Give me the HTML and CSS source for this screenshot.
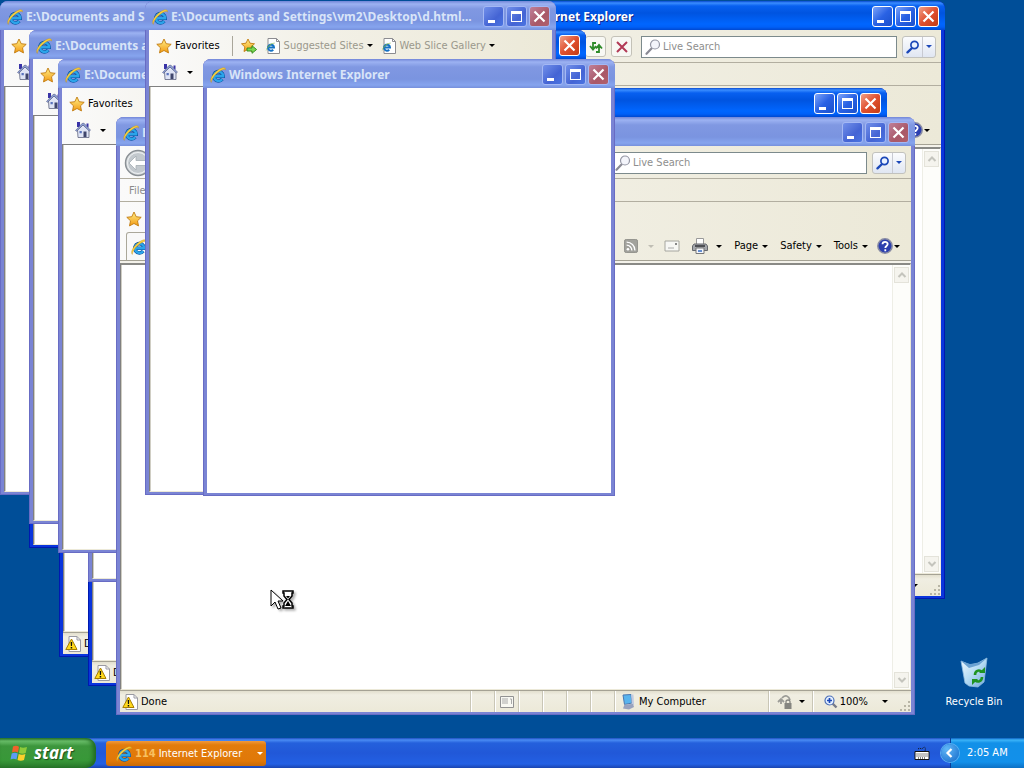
FILE: index.html
```
<!DOCTYPE html>
<html lang="en">
<head>
	<meta charset="UTF-8">
	<meta name="viewport" content="width=device-width, initial-scale=1.0">
	<title>Desktop</title>
	<link rel="stylesheet" href="styles.css">
</head>
<body>
	<!-- shared icons -->
	<svg class="defs" width="0" height="0" aria-hidden="true">
		<defs>
			<linearGradient id="gold" x1="0" y1="0" x2="0" y2="1"><stop offset="0" stop-color="#fff08a"/><stop offset="1" stop-color="#f39a12"/></linearGradient>
			<radialGradient id="sea" cx=".4" cy=".3" r=".8"><stop offset="0" stop-color="#5fd2fa"/><stop offset="1" stop-color="#0b62b8"/></radialGradient>
			<linearGradient id="bin" x1="0" y1="0" x2="1" y2="1"><stop offset="0" stop-color="#f4fbff"/><stop offset=".5" stop-color="#b5dcf4"/><stop offset="1" stop-color="#6fa5d8"/></linearGradient>
		</defs>
		<symbol id="ie" viewBox="0 0 16 16">
			<path d="M4 9.200h9.200A4.700 4.700 0 1 0 12.200 12.200" fill="none" stroke="#0b4f9c" stroke-width="3.600"/>
			<path d="M4 9.200h9.200A4.700 4.700 0 1 0 12.200 12.200" fill="none" stroke="#2ba4ea" stroke-width="2.400"/>
			<path d="M1.300 15.400C-1 12.800 3 6 9 2.400 12.500.4 15.900.1 15.600 3c-.6-1.300-3-.7-6 1.300C4.900 7.400 1.300 12.500 1.300 15.400z" fill="#ffd23c" stroke="#b98b18" stroke-width=".4"/>
		</symbol>
		<symbol id="star" viewBox="0 0 16 16"><path d="M8 1l2.200 4.700 5 .6-3.700 3.500 1 5.100L8 12.500l-4.500 2.400 1-5.100L.8 6.300l5-.6z" fill="url(#gold)" stroke="#c17a10" stroke-width=".9"/></symbol>
		<symbol id="staradd" viewBox="0 0 16 16"><path d="M7 1l2 4.200 4.500.6-3.300 3.100.8 4.600-4-2.200-4 2.200.8-4.600L.5 5.800 5 5.200z" fill="url(#gold)" stroke="#c17a10" stroke-width=".9"/><path d="M6 10h5V7.700l4.600 3.800L11 15.300V13H6z" fill="#7ad651" stroke="#2f8a1c" stroke-width=".9"/></symbol>
		<symbol id="page" viewBox="0 0 16 16"><path d="M3 .5h8.500L14.500 3.500v12H3z" fill="#fff" stroke="#8c8c90"/><path d="M11.500.5v3h3" fill="none" stroke="#8c8c90"/><path d="M3 9.500h6A3 3 0 1 0 8.200 11.700" fill="none" stroke="#1572c4" stroke-width="2"/><path d="M1 13.500c-.7-1.500 2-6 5.500-8 2-1.100 3.800-1.200 3.500 0-1-.7-3 .4-5 1.900C2.500 9.500.8 12 1 13.500z" fill="#7db33c"/></symbol>
		<symbol id="home" viewBox="0 0 16 16"><path d="M2 0h3v5H2zM11.500 1.500h2v4h-2z" fill="#3933a8"/><path d="M2.500 8L8 3l6 5v7.500h-11z" fill="#dfe4f5" stroke="#5f6481" stroke-width=".8"/><path d="M.5 8.500L7 1.500l2-.3 6.500 7-1.200.8L8 3 1.500 9.300z" fill="#8fa2d6" stroke="#555d86" stroke-width=".6"/><path d="M8.500 9.500h3V15h-3z" fill="#40466c"/><path d="M4.500 9h2.300v2.300H4.500z" fill="#5a73bd"/></symbol>
		<symbol id="warn" viewBox="0 0 16 16"><path d="M4 .5h8L15.500 4v11.500H4z" fill="#fff" stroke="#9a9aa2"/><path d="M12 .5V4h3.500" fill="none" stroke="#9a9aa2"/><path d="M6.500 3L12 13.500H.8z" fill="#ffd91c" stroke="#a77e00" stroke-linejoin="round"/><path d="M5.700 6h1.500l-.2 4H5.900zM5.700 11h1.500v1.500H5.700z" fill="#111"/></symbol>
		<symbol id="lens" viewBox="0 0 16 16"><path d="M6.500 9.500L1.500 14.800" stroke="#8b8b95" stroke-width="2.200" stroke-linecap="round"/><circle cx="10" cy="5.500" r="4.500" fill="#f4f5fb" stroke="#9496a4" stroke-width="1.200"/></symbol>
		<symbol id="find" viewBox="0 0 14 14"><path d="M5.500 8.500L1.500 12.300" stroke="#1c48b8" stroke-width="2.400" stroke-linecap="round"/><circle cx="8.500" cy="5" r="3.600" fill="#eaf2ff" stroke="#1c48b8" stroke-width="1.700"/></symbol>
		<symbol id="min" viewBox="0 0 21 21"><path d="M5 14h7v3H5z" fill="#fff"/></symbol>
		<symbol id="max" viewBox="0 0 21 21"><path d="M5 5h11v11H5zM6 8v7h9V8z" fill="#fff" fill-rule="evenodd"/></symbol>
		<symbol id="close" viewBox="0 0 21 21"><path d="M5.500 5.500l10 10M15.500 5.500l-10 10" stroke="#fff" stroke-width="2.200"/></symbol>
		<symbol id="up" viewBox="0 0 10 10"><path d="M1.500 7L5 3.500 8.500 7" fill="none" stroke="#c4c4bd" stroke-width="2"/></symbol>
		<symbol id="down" viewBox="0 0 10 10"><path d="M1.500 3L5 6.500 8.500 3" fill="none" stroke="#c4c4bd" stroke-width="2"/></symbol>
		<symbol id="rss" viewBox="0 0 16 16"><rect x=".5" y=".5" width="15" height="15" rx="2" fill="#a2a29c" stroke="#8c8c86"/><circle cx="4.500" cy="11.700" r="1.500" fill="#fff"/><path d="M3 7a6 6 0 0 1 6 6M3 3.500A9.500 9.500 0 0 1 12.500 13" fill="none" stroke="#fff" stroke-width="1.500"/></symbol>
		<symbol id="mail" viewBox="0 0 16 16"><path d="M1 3h14v10H1z" fill="#f7f7f4" stroke="#a6a69f"/><path d="M11 5h2v2h-2z" fill="#888"/><path d="M4 10h6" stroke="#aaa"/></symbol>
		<symbol id="print" viewBox="0 0 16 16"><path d="M4.500.5h7v6h-7z" fill="#fff" stroke="#999"/><path d="M2 6h12l1.500 2v4.500H.5V8z" fill="#a4a7ac" stroke="#66686d"/><path d="M3 7h10v2H3z" fill="#4d4f54"/><path d="M4 10h8v5.500H4z" fill="#f4f6fa" stroke="#777"/><path d="M6 12h4v2H6z" fill="#658ed0"/></symbol>
		<symbol id="help" viewBox="0 0 16 16"><circle cx="8" cy="8" r="7.200" fill="#2c3fae" stroke="#898ca4" stroke-width="1.500"/><path d="M5.500 6.300c0-3.200 5.200-3.200 5.200-.2 0 1.900-2.400 1.900-2.400 3.900M8.300 11.300v2" fill="none" stroke="#fff" stroke-width="1.800"/></symbol>
		<symbol id="refresh" viewBox="0 0 16 16"><path d="M8 4H5v5M2 7l3 3.500L8 7M8 13h3V7M8 9.500L11 6l3 3.500" fill="none" stroke="#2f8b2a" stroke-width="1.800"/></symbol>
		<symbol id="stop" viewBox="0 0 16 16"><path d="M3 3l10 10M13 3L3 13" stroke="#b23a56" stroke-width="2"/></symbol>
		<symbol id="grip" viewBox="0 0 12 12"><path d="M9 1h2v2H9zM5 5h2v2H5zM9 5h2v2H9zM1 9h2v2H1zM5 9h2v2H5zM9 9h2v2H9z" fill="#b8b5a5"/></symbol>
	</svg>

	<main class="desktop">
		<!-- full window behind everything -->
		<section class="window full active w-c">
			<header class="titlebar"></header>
			<div class="page"></div>
			<footer class="status"><div class="cell grow"><svg class="i16"><use href="#warn"/></svg>Done</div></footer>
		</section>

		<section class="window full active w-a">
			<header class="titlebar">
				<svg class="i16"><use href="#ie"/></svg>
				<h2>E:\Documents and Settings\vm2\Desktop\d.html - Windows Internet Explorer</h2>
				<button class="wb" aria-label="Minimize"><svg><use href="#min"/></svg></button>
				<button class="wb" aria-label="Maximize"><svg><use href="#max"/></svg></button>
				<button class="wb x" aria-label="Close"><svg><use href="#close"/></svg></button>
			</header>
			<div class="nav">
				<input class="address" type="text" aria-label="Address">
				<button class="tool" aria-label="Refresh"><svg class="i16"><use href="#refresh"/></svg></button>
				<button class="tool" aria-label="Stop"><svg class="i16"><use href="#stop"/></svg></button>
				<label class="search"><svg class="i16"><use href="#lens"/></svg><input type="text" placeholder="Live Search" aria-label="Live Search"></label>
				<div class="go"><button aria-label="Search"><svg class="i14"><use href="#find"/></svg></button><button aria-label="Search options"><i class="arrow"></i></button></div>
			</div>
			<div class="menu"></div>
			<div class="bars">
				<div class="favs"></div>
				<div class="commands">
					<button class="help" aria-label="Help"><svg class="i16"><use href="#help"/></svg><i class="arrow"></i></button>
				</div>
			</div>
			<div class="page">
				<div class="scroll">
					<button aria-label="Scroll up"><svg><use href="#up"/></svg></button>
					<button aria-label="Scroll down"><svg><use href="#down"/></svg></button>
				</div>
			</div>
			<footer class="status">
				<div class="cell grow"></div>
				<div class="cell zoom"><i class="arrow"></i><svg class="grip"><use href="#grip"/></svg></div>
			</footer>
		</section>

		<section class="window popup active w-q">
			<header class="titlebar">
				<h2></h2>
				<button class="wb x" aria-label="Close"><svg><use href="#close"/></svg></button>
			</header>
			<div class="page"></div>
		</section>

		<section class="window full active w-b">
			<header class="titlebar">
				<h2></h2>
				<button class="wb" aria-label="Minimize"><svg><use href="#min"/></svg></button>
				<button class="wb" aria-label="Maximize"><svg><use href="#max"/></svg></button>
				<button class="wb x" aria-label="Close"><svg><use href="#close"/></svg></button>
			</header>
			<div class="page"></div>
			<footer class="status"><div class="cell grow"><svg class="i16"><use href="#warn"/></svg>Done</div></footer>
		</section>

		<section class="window popup active w-r"><header class="titlebar"></header><div class="page"></div></section>

		<section class="window popup w-u">
			<header class="titlebar">
				<svg class="i16"><use href="#ie"/></svg>
				<h2>E:\Documents and Settings</h2>
			</header>
			<div class="favs"><svg class="i16"><use href="#star"/></svg></div>
			<div class="commands"><svg class="i16"><use href="#home"/></svg></div>
			<div class="page"></div>
		</section>

		<section class="window popup w-p">
			<header class="titlebar">
				<svg class="i16"><use href="#ie"/></svg>
				<h2>E:\Documents and</h2>
			</header>
			<div class="favs"><svg class="i16"><use href="#star"/></svg></div>
			<div class="commands"><svg class="i16"><use href="#home"/></svg></div>
			<div class="page"></div>
		</section>

		<section class="window popup w-s"><header class="titlebar"></header><div class="page"></div></section>

		<section class="window popup w-t">
			<header class="titlebar">
				<svg class="i16"><use href="#ie"/></svg>
				<h2>E:\Documents</h2>
			</header>
			<div class="favs"><button><svg class="i16"><use href="#star"/></svg>Favorites</button></div>
			<div class="commands"><button aria-label="Home"><svg class="i16"><use href="#home"/></svg><i class="arrow"></i></button></div>
			<div class="page"></div>
		</section>

		<!-- main browser window -->
		<section class="window full w-main">
			<header class="titlebar">
				<svg class="i16"><use href="#ie"/></svg>
				<h2>E:\</h2>
				<button class="wb" aria-label="Minimize"><svg><use href="#min"/></svg></button>
				<button class="wb" aria-label="Maximize"><svg><use href="#max"/></svg></button>
				<button class="wb x" aria-label="Close"><svg><use href="#close"/></svg></button>
			</header>
			<div class="nav">
				<button class="back" aria-label="Back"><svg viewBox="0 0 28 28"><circle cx="14" cy="14" r="12.500" fill="#d6dadd" stroke="#8a9095" stroke-width="1.500"/><circle cx="14" cy="14" r="10.500" fill="#c3c9ce" stroke="#eef1f3"/><path d="M5 14l7-7v4.500h10v5H12V21z" fill="#fff" stroke="#a5adb4" stroke-width=".8"/></svg></button>
				<input class="address" type="text" aria-label="Address">
				<label class="search"><svg class="i16"><use href="#lens"/></svg><input type="text" placeholder="Live Search" aria-label="Live Search"></label>
				<div class="go"><button aria-label="Search"><svg class="i14"><use href="#find"/></svg></button><button aria-label="Search options"><i class="arrow"></i></button></div>
			</div>
			<div class="menu"><button>File</button></div>
			<div class="bars">
				<div class="favs"><svg class="i16"><use href="#star"/></svg></div>
				<div class="commands">
					<div class="tab"><svg class="i16"><use href="#ie"/></svg></div>
					<button class="off" aria-label="Feeds"><svg class="i14"><use href="#rss"/></svg><i class="arrow"></i></button>
					<button aria-label="Read mail"><svg class="i16"><use href="#mail"/></svg></button>
					<button class="wide" aria-label="Print"><svg class="i16"><use href="#print"/></svg><i class="arrow"></i></button>
					<button>Page<i class="arrow"></i></button>
					<button>Safety<i class="arrow"></i></button>
					<button>Tools<i class="arrow"></i></button>
					<button class="help" aria-label="Help"><svg class="i16"><use href="#help"/></svg><i class="arrow"></i></button>
				</div>
			</div>
			<div class="page">
				<div class="scroll">
					<button aria-label="Scroll up"><svg><use href="#up"/></svg></button>
					<button aria-label="Scroll down"><svg><use href="#down"/></svg></button>
				</div>
			</div>
			<footer class="status">
				<div class="cell grow"><svg class="i16"><use href="#warn"/></svg>Done</div>
				<div class="cell"></div>
				<div class="cell"><svg class="i16" viewBox="0 0 16 16"><path d="M1.500 2.500h13v11h-13z" fill="#f8f8f2" stroke="#929292"/><path d="M3 5h6M3 7h6M3 9h6M11 5h1.500v5" fill="none" stroke="#aaa"/></svg></div>
				<div class="cell"></div>
				<div class="cell"></div>
				<div class="cell"></div>
				<div class="cell"></div>
				<div class="cell zone"><svg class="i16" viewBox="0 0 16 16"><path d="M3 1l8-.5 1 8.500-7.500 1.500z" fill="#59b4ee" stroke="#4a78b0"/><path d="M11 .5h2.500l.5 10-2 1.500z" fill="#c3cbe0"/><path d="M4.500 10.500L13 10l1 3-5 2.500-6-1z" fill="#98a2be"/></svg>My Computer</div>
				<div class="cell lock"><svg class="i16" viewBox="0 0 16 16"><path d="M1 8l3-3 3 3M4 6v4M5 4c3-4 7-2 8 2" fill="none" stroke="#9b9b96" stroke-width="1.800"/><path d="M7.500 9h7v6h-7z" fill="#858580"/><path d="M9 9V7.500c0-2 4-2 4 0V9" fill="none" stroke="#858580" stroke-width="1.300"/></svg><i class="arrow"></i></div>
				<div class="cell zoom"><svg class="i14" viewBox="0 0 14 14"><path d="M8.500 8.500l4 4" stroke="#777b88" stroke-width="2.400"/><circle cx="5.500" cy="5.500" r="4.500" fill="#e4f0ff" stroke="#4d70b8" stroke-width="1.200"/><path d="M3 5.500h5M5.500 3v5" stroke="#1c48b8" stroke-width="1.700"/></svg><span>100%</span><i class="arrow"></i><svg class="grip"><use href="#grip"/></svg></div>
			</footer>
		</section>

		<section class="window popup w-d">
			<header class="titlebar">
				<svg class="i16"><use href="#ie"/></svg>
				<h2>E:\Documents and Settings\vm2\Desktop\d.html...</h2>
				<button class="wb" aria-label="Minimize"><svg><use href="#min"/></svg></button>
				<button class="wb" aria-label="Maximize"><svg><use href="#max"/></svg></button>
				<button class="wb x" aria-label="Close"><svg><use href="#close"/></svg></button>
			</header>
			<div class="favs">
				<button class="sep"><svg class="i16"><use href="#star"/></svg>Favorites</button>
				<button aria-label="Add to favorites"><svg class="i16"><use href="#staradd"/></svg></button>
				<button class="dim"><svg class="i16"><use href="#page"/></svg>Suggested Sites<i class="arrow"></i></button>
				<button class="dim"><svg class="i16"><use href="#page"/></svg>Web Slice Gallery<i class="arrow"></i></button>
			</div>
			<div class="commands"><button aria-label="Home"><svg class="i16"><use href="#home"/></svg><i class="arrow"></i></button></div>
			<div class="page"></div>
		</section>

		<section class="window popup plain w-f">
			<header class="titlebar">
				<svg class="i16"><use href="#ie"/></svg>
				<h2>Windows Internet Explorer</h2>
				<button class="wb" aria-label="Minimize"><svg><use href="#min"/></svg></button>
				<button class="wb" aria-label="Maximize"><svg><use href="#max"/></svg></button>
				<button class="wb x" aria-label="Close"><svg><use href="#close"/></svg></button>
			</header>
			<div class="page"></div>
		</section>

		<a class="recycle" href="#">
			<svg viewBox="0 0 32 32"><path d="M3 5l9 4 8-2 9-5-3 24-6 5-9-1-4-3z" fill="url(#bin)" stroke="#8fbde2" stroke-width=".8"/><path d="M3 5l8 7 10-3 8-7-9 5-8 1z" fill="#6aa2d2"/><path d="M17 19c0-4 4-6 7-3M24 21c0 4-4 6-7 3" fill="none" stroke="#1f9422" stroke-width="2.600"/><path d="M21 17h6v-6zM20 23h-6v6z" fill="#1f9422"/></svg>
			<span>Recycle Bin</span>
		</a>

		<svg class="cursor" viewBox="0 0 26 22"><path d="M1 1v16l4-4 3 7 3-1-3-7h5z" fill="#fff" stroke="#000"/><path d="M13 2h10v2h-1v3l-3 3.500 3 3.500v3h1v2H13v-2h1v-3l3-3.500L14 7V4h-1z" fill="#fff" stroke="#000" stroke-width="1.500"/><path d="M16 7h4l-2 2.500zM18 12l3 5h-6z" fill="#000"/></svg>
	</main>

	<footer class="taskbar">
		<button class="start"><svg viewBox="0 0 20 18"><path d="M3 2.500c2-1 4-1 6 .2L8 8.500c-2-1-4-1-6 0z" fill="#f0622c"/><path d="M10 3c2 1 4 1 7 0l-1.300 6c-2 1-4.500 1-6.700 0z" fill="#8ecb3a"/><path d="M1.700 9.500c2-1 4-1 6 0L6.500 15.500c-2-1-4-1-6 0z" fill="#5d9cf5"/><path d="M8.700 10c2 1 4.500 1 6.700 0L14 16c-2 1-4.500 1-6.500 0z" fill="#fbd02c"/></svg>start</button>
		<button class="task"><svg class="i16"><use href="#ie"/></svg><b>114</b><span>Internet Explorer</span><i class="arrow"></i></button>
		<svg class="i16 keyboard" viewBox="0 0 16 16"><path d="M1 6.500h14v8H1z" fill="#fff" stroke="#111"/><path d="M2.500 9h11M2.500 11h11M4 13h8" stroke="#111" stroke-dasharray="1 1"/><path d="M4 4c2-2 3 1 5-1s3 0 2 3" fill="none" stroke="#111" stroke-dasharray="1 1"/></svg>
		<div class="tray">
			<button class="hide" aria-label="Show hidden icons"><svg viewBox="0 0 18 18"><path d="M10.500 5l-4 4 4 4" fill="none" stroke="#fff" stroke-width="2.200"/></svg></button>
			<time>2:05 AM</time>
		</div>
	</footer>
</body>
</html>
```
FILE: styles.css
```
*{
	box-sizing:border-box;
}

body{
	margin:0;
	height:100vh;
	display:flex;
	flex-direction:column;
	overflow:hidden;
	background:#004e98;
	font-family:"DejaVu Sans Condensed","DejaVu Sans",sans-serif;
	font-size:11px;
	line-height:14px;
	color:#000;
}

button,input{
	font:inherit;
	color:inherit;
	margin:0;
	padding:0;
	border:0;
	background:none;
}

svg{
	display:block;
	flex:none;
}

.defs{
	position:absolute;
}

.i16{
	width:16px;
	height:16px;
}

.i14{
	width:14px;
	height:14px;
}

.arrow{
	flex:none;
	border:3px solid transparent;
	border-top-color:#000;
	border-bottom:0;
}

.desktop{
	flex:1;
	position:relative;
	min-height:0;
}

/* windows */
.window{
	position:absolute;
	display:flex;
	flex-direction:column;
	padding:0 4px 3px;
	background:#7a84d4;
	border-radius:8px 8px 0 0;
	box-shadow:inset 1px 0 #686cc4,inset -1px -1px #686cc4;
	overflow:hidden;
}

.window.active{
	background:#0a35dc;
	box-shadow:inset 1px 0 #0019b0,inset -1px -1px #0019b0;
}

.popup{
	width:411px;
	height:494px;
}

.full{
	width:799px;
	height:598px;
}

.w-c{left:59px;top:59px;}
.w-a{left:146px;top:1px;}
.w-q{left:175px;top:30px;}
.w-b{left:88px;top:88px;}
.w-r{left:29px;top:54px;}
.w-u{left:0;top:1px;}
.w-p{left:29px;top:30px;}
.w-s{left:88px;top:88px;}
.w-t{left:58px;top:59px;}
.w-main{left:116px;top:117px;}
.w-d{left:145px;top:1px;}
.w-f{left:203px;top:59px;width:412px;height:437px;}

.titlebar{
	flex:none;
	display:flex;
	align-items:center;
	gap:2px;
	height:29px;
	margin:0 -4px;
	padding:2px 6px 0 7px;
	background:linear-gradient(#7286d8,#9cb2f2 3px,#8098e2 8px,#7a94e0 20px,#86a4ee 26px,#7690dc);
}

.active .titlebar{
	background:linear-gradient(#0a4ad0,#3a8dff 2px,#0860f0 5px,#0054e0 12px,#0066ff 23px,#0060f8 26px,#0048d0);
}

.titlebar h2{
	flex:1;
	min-width:0;
	margin:0;
	padding-left:1px;
	overflow:hidden;
	white-space:nowrap;
	font:bold 12px/18px "Noto Sans","Open Sans",sans-serif;
	color:#d8e4f8;
}

.active h2{
	color:#fff;
	text-shadow:1px 1px #0f2a8c;
}

.wb{
	flex:none;
	width:21px;
	height:21px;
	border:1px solid #a4b8f4;
	border-radius:3px;
	background:linear-gradient(135deg,#7290ea,#4464d4 60%,#4a74e2);
}

.wb svg{
	width:21px;
	height:21px;
	margin:-1px;
}

.wb.x{
	background:linear-gradient(135deg,#c08098,#a95868 60%,#b0606c);
}

.active .wb{
	border-color:#fff;
	background:linear-gradient(135deg,#7ca4fa,#2a62e4 50%,#1a50cc);
}

.active .wb.x{
	background:linear-gradient(135deg,#f0a088,#e05030 50%,#c43c14);
}

/* toolbars */
.nav,.menu,.bars,.popup > .favs,.popup > .commands{
	flex:none;
	background:linear-gradient(90deg,#fafafa,#f2f0e6 45%,#ece9d8);
}

.nav{
	display:flex;
	align-items:center;
	gap:5px;
	height:33px;
	padding:1px 5px 0 4px;
	border-bottom:1px solid #b2aea0;
}

.back{
	width:28px;
	height:28px;
}

.address{
	flex:1;
	min-width:0;
	height:22px;
	background:#fff;
	border:1px solid #8a98a8;
}

.tool{
	display:flex;
	align-items:center;
	justify-content:center;
	width:21px;
	height:21px;
	background:#f8f8f4;
	border:1px solid #c4c2b8;
	border-radius:3px;
}

.search{
	display:flex;
	align-items:center;
	gap:2px;
	width:256px;
	height:22px;
	margin-left:4px;
	padding:0 3px;
	background:#fff;
	border:1px solid #7c8a8c;
}

.search input{
	flex:1;
	min-width:0;
	outline:0;
}

.search input::placeholder{
	color:#8e8e8e;
	opacity:1;
}

.go{
	display:flex;
	width:34px;
	height:22px;
	background:linear-gradient(#fbfcfe,#e0e6f2);
	border:1px solid #c2c2be;
	border-radius:3px;
}

.go button{
	display:flex;
	align-items:center;
	justify-content:center;
	width:12px;
}

.go button:first-child{
	width:20px;
	border-right:1px solid #c8cad2;
}

.go .arrow{
	border-top-color:#1c48b8;
}

.menu{
	display:flex;
	align-items:center;
	height:23px;
	padding:2px 9px 0;
	color:#8a8a8a;
	border-bottom:1px solid #b2aea0;
}

.favs,.commands{
	display:flex;
	align-items:center;
}

.favs{
	height:29px;
	padding:2px 7px 0;
	gap:8px;
}

.favs button{
	display:flex;
	align-items:center;
	gap:3px;
}

.favs .sep{
	height:20px;
	padding-right:12px;
	border-right:1px solid #a9a69a;
}

.favs .dim{
	color:#9a988c;
}

.commands{
	height:27px;
	padding:0 13px 1px;
}

.commands button{
	display:flex;
	align-items:center;
	gap:9px;
}

.bars{
	height:59px;
	margin-bottom:2px;
	border-bottom:1px solid #a5a294;
	box-shadow:0 2px #f4f2ea;
}

.bars .favs{
	padding:4px 6px 0;
}

.bars .commands{
	justify-content:flex-end;
	height:29px;
	gap:12px;
	padding:1px 11px 0 6px;
}

.bars .commands button{
	gap:4px;
}

.bars .commands .help{
	gap:1px;
	margin-left:-3px;
}

.bars .commands .off{
	gap:10px;
	margin-right:-2px;
}

.bars .commands .wide{
	gap:8px;
}

.off .arrow{
	border-top-color:#c0beb4;
}

.tab{
	display:flex;
	align-items:center;
	align-self:stretch;
	width:180px;
	margin-right:auto;
	padding:0 4px;
	background:#f8f8f8;
	border:1px solid #aaa79a;
	border-bottom:0;
	border-radius:3px 3px 0 0;
}

.page{
	flex:1;
	min-height:0;
	display:flex;
	justify-content:flex-end;
	background:#fff;
	border:1px solid #808080;
	border-right-color:#ece9d8;
	border-bottom-color:#ece9d8;
	box-shadow:inset 1px 0 #d0cec4;
}

.full .page{
	border-top:2px solid #8a8a86;
}

.plain .page{
	border:0;
	box-shadow:none;
}

.scroll{
	display:flex;
	flex-direction:column;
	justify-content:space-between;
	width:18px;
	padding:2px 2px 1px 1px;
	background:#fdfdfa;
	border-left:1px solid #eeeee6;
}

.scroll button{
	display:flex;
	align-items:center;
	justify-content:center;
	width:15px;
	height:16px;
	background:#f5f4ee;
	border:1px solid #e4e3da;
}

.scroll svg{
	width:10px;
	height:10px;
}

.status{
	flex:none;
	display:flex;
	height:22px;
	background:linear-gradient(#e2dfce,#f0eee2 4px,#ece9d8);
	border-top:1px solid #a5a294;
}

.cell{
	display:flex;
	align-items:center;
	justify-content:center;
	width:24px;
	border-right:1px solid #c9c6b6;
	box-shadow:1px 0 #fff;
}

.cell.grow{
	flex:1;
	justify-content:flex-start;
	gap:3px;
	padding-left:2px;
}

.cell.zone{
	width:154px;
	justify-content:flex-start;
	gap:3px;
	padding-left:5px;
}

.cell.lock{
	width:44px;
	gap:6px;
}

.cell.zoom{
	width:98px;
	gap:2px;
	justify-content:flex-end;
	border:0;
	box-shadow:none;
}

.zoom .arrow{
	margin:0 9px 0 12px;
}

.grip{
	align-self:flex-end;
	width:12px;
	height:12px;
}

/* desktop items */
.recycle{
	position:absolute;
	right:12px;
	bottom:29px;
	width:76px;
	display:flex;
	flex-direction:column;
	align-items:center;
	gap:7px;
	color:#fff;
	text-decoration:none;
}

.recycle svg{
	width:32px;
	height:32px;
}

.cursor{
	position:absolute;
	left:270px;
	top:589px;
	width:26px;
	height:22px;
	filter:drop-shadow(2px 2px 1px rgba(0,0,0,0.3));
}

/* taskbar */
.taskbar{
	flex:none;
	display:flex;
	align-items:center;
	height:30px;
	background:linear-gradient(#1f4fc0,#4a8cf4 2px,#2460dc 5px,#2158d8 15px,#2360e4 26px,#1a44b0);
}

.start{
	display:flex;
	align-items:center;
	gap:4px;
	width:96px;
	height:30px;
	padding-left:10px;
	border-radius:0 10px 10px 0;
	background:linear-gradient(#2c7a2e,#6cc06c 3px,#3c963c 8px,#389838 22px,#2a7a2c);
	box-shadow:inset -3px 0 4px #206a22;
	color:#fff;
	font:italic bold 17px/24px "Open Sans","Noto Sans",sans-serif;
	text-shadow:1px 1px 1px #1c4c1c;
}

.start svg{
	width:20px;
	height:18px;
}

.task{
	display:flex;
	align-items:center;
	gap:3px;
	width:160px;
	height:25px;
	margin-left:10px;
	padding:1px 3px 0 10px;
	background:linear-gradient(#f09a3c,#e27c0c 4px,#e07808 20px,#c86a08);
	border-radius:3px;
	color:#fff;
}

.task b{
	color:#f8c060;
}

.task .arrow{
	margin-left:auto;
	border-top-color:#fff;
}

.keyboard{
	margin-left:auto;
}

.tray{
	display:flex;
	align-items:center;
	gap:8px;
	width:74px;
	height:30px;
	margin-left:20px;
	background:linear-gradient(#0c60c0,#3cb4f8 2px,#1290e8 5px,#1290ea 24px,#0c70c4);
	border-left:1px solid #0a3c98;
	color:#fff;
}

.hide{
	width:18px;
	height:18px;
	margin-left:-10px;
	border-radius:9px;
	background:radial-gradient(circle at 6px 5px,#60b8f8,#1468c8);
	box-shadow:0 0 0 1px #5ab0f0;
}
```
